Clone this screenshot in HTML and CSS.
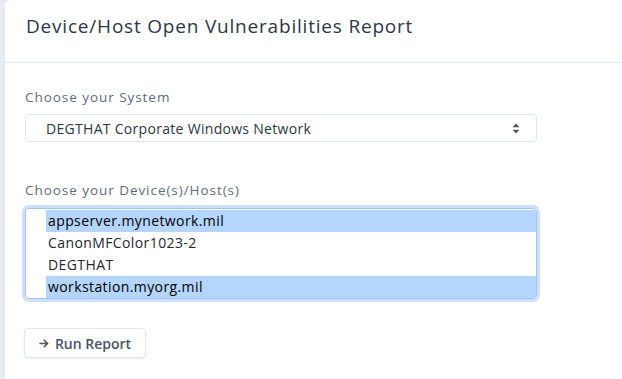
FILE: index.html
```html
<!DOCTYPE html>
<html lang="en">
<head>
<meta charset="utf-8">
<title>Device/Host Open Vulnerabilities Report</title>
<link rel="stylesheet" href="styles.css">
</head>
<body>
<div class="card">
  <div class="card-header">
    <h1 class="title">Device/Host Open Vulnerabilities Report</h1>
  </div>
  <div class="card-body">
    <div class="field">
      <label class="label">Choose your System</label>
      <div class="select">
        <span class="select-value">DEGTHAT Corporate Windows Network</span>
        <svg class="select-icon" width="8" height="11" viewBox="0 0 8 11"><path d="M4 0.5 L7.5 4.2 H0.5 Z M4 10.5 L7.5 6.8 H0.5 Z" fill="#4a5568"/></svg>
      </div>
    </div>
    <div class="field field-hosts">
      <label class="label">Choose your Device(s)/Host(s)</label>
      <div class="listbox">
        <div class="option selected">appserver.mynetwork.mil</div>
        <div class="option">CanonMFColor1023-2</div>
        <div class="option">DEGTHAT</div>
        <div class="option selected">workstation.myorg.mil</div>
      </div>
    </div>
    <button class="btn" type="button"><svg class="btn-arrow" width="10" height="9" viewBox="0 0 10 9"><path d="M1 4.5 H8.6 M5.2 1.2 L8.6 4.5 L5.2 7.8" fill="none" stroke="#4a5568" stroke-width="1.6" stroke-linecap="round" stroke-linejoin="round"/></svg>Run Report</button>
  </div>
</div>
</body>
</html>
```
FILE: styles.css
```css
html, body {
  margin: 0;
  padding: 0;
  height: 100%;
}
body {
  background: #e7ebf2;
  font-family: "Open Sans", "Liberation Sans", sans-serif;
  overflow: hidden;
}
.card {
  margin-left: 5px;
  background: #ffffff;
  border-top-left-radius: 6px;
  min-height: 100%;
}
.card-header {
  height: 63px;
  box-sizing: border-box;
  padding: 12px 0 0 21px;
  border-bottom: 1px solid #e2e8f0;
}
.title {
  margin: 0;
  font-size: 19px;
  font-weight: 400;
  letter-spacing: 0.8px;
  line-height: 28px;
  color: #2d3748;
}
.card-body {
  padding: 24px 0 0 20px;
}
.field {
  width: 512px;
}
.field-hosts {
  margin-top: 38px;
}
.label {
  display: block;
  font-size: 13.5px;
  letter-spacing: 0.95px;
  line-height: 20px;
  color: #5f6b7e;
  margin-bottom: 7px;
}
.select {
  height: 28px;
  box-sizing: border-box;
  border: 1px solid #dfe5ee;
  border-radius: 4px;
  display: flex;
  align-items: center;
  justify-content: space-between;
  padding: 0 16px 0 20px;
}
.select-value {
  font-size: 14px;
  letter-spacing: 0.3px;
  color: #2d3748;
}
.field-hosts .label {
  margin-bottom: 8px;
}
.listbox {
  border: 1px solid #a4c2f4;
  border-radius: 4px;
  box-shadow: 0 0 0 3px #cfe0fb;
  padding: 1px 0 0 20px;
}
.option {
  height: 22px;
  line-height: 21px;
  padding-left: 2px;
  font-size: 14px;
  letter-spacing: 0.4px;
  color: #1f2733;
}
.option.selected {
  background: #b4d5fe;
  color: #000;
}
.btn {
  margin-top: 29px;
  width: 122px;
  height: 30px;
  background: #fff;
  border: 1px solid #e2e8f0;
  border-radius: 4px;
  box-shadow: 0 1px 2px rgba(0,0,0,0.08);
  font-family: inherit;
  font-size: 14px;
  font-weight: 600;
  color: #4a5568;
  padding: 0;
  display: flex;
  align-items: center;
  justify-content: center;
  margin-left: -1px;
}
.btn-arrow {
  margin-right: 6px;
}
```
